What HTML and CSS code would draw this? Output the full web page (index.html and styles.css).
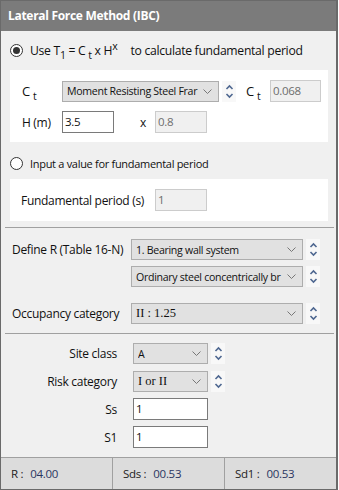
FILE: index.html
```html
<!DOCTYPE html>
<html lang="en">
<head>
  <meta charset="UTF-8">
  <title>Lateral Force Method (IBC)</title>
  <link rel="stylesheet" href="styles.css">
</head>
<body>

  <div class="window">
    <div class="title">Lateral Force Method (IBC)</div>

    <div class="content">
      <div class="radio-row first">
        <span class="radio checked"></span>
        <span>Use T<sub>1</sub> = C <sub>t</sub> x H<sup>x</sup></span>
        <span class="tail">to calculate fundamental period</span>
      </div>

      <div class="panel panel-ct">
        <div class="row">
          <span class="lbl lbl-ct">C <sub>t</sub></span>
          <div class="select sel-ct"><span class="val">Moment Resisting Steel Frar</span><svg class="chev" width="9" height="5" viewBox="0 0 9 5"><polyline points="0.5,0.5 4.5,4.5 8.5,0.5" fill="none" stroke="#777" stroke-width="1"/></svg></div>
          <div class="spin"><svg width="9" height="15" viewBox="0 0 9 15"><polyline points="1.5,5 4.5,2 7.5,5" fill="none" stroke="#4e6790" stroke-width="1.6"/><polyline points="1.5,10 4.5,13 7.5,10" fill="none" stroke="#4e6790" stroke-width="1.6"/></svg></div>
          <span class="lbl lbl-ct2">C <sub>t</sub></span>
          <div class="input disabled w50">0.068</div>
        </div>
        <div class="row row-h">
          <span class="lbl lbl-h">H (m)</span>
          <div class="input w52">3.5</div>
          <span class="lbl lbl-x">x</span>
          <div class="input disabled w52">0.8</div>
        </div>
      </div>

      <div class="radio-row second">
        <span class="radio"></span>
        <span>Input a value for fundamental period</span>
      </div>

      <div class="panel panel-fp">
        <div class="row">
          <span class="lbl lbl-fp">Fundamental period (s)</span>
          <div class="input disabled w52">1</div>
        </div>
      </div>

      <div class="sep sep1"></div>

      <div class="row row-r">
        <span class="lbl lbl-wide">Define R (Table 16-N)</span>
        <div class="select sel-wide"><span class="val">1. Bearing wall system</span><svg class="chev" width="9" height="5" viewBox="0 0 9 5"><polyline points="0.5,0.5 4.5,4.5 8.5,0.5" fill="none" stroke="#777" stroke-width="1"/></svg></div>
        <div class="spin"><svg width="9" height="15" viewBox="0 0 9 15"><polyline points="1.5,5 4.5,2 7.5,5" fill="none" stroke="#4e6790" stroke-width="1.6"/><polyline points="1.5,10 4.5,13 7.5,10" fill="none" stroke="#4e6790" stroke-width="1.6"/></svg></div>
      </div>
      <div class="row row-r2">
        <span class="lbl lbl-wide"></span>
        <div class="select sel-wide"><span class="val">Ordinary steel concentrically br</span><svg class="chev" width="9" height="5" viewBox="0 0 9 5"><polyline points="0.5,0.5 4.5,4.5 8.5,0.5" fill="none" stroke="#777" stroke-width="1"/></svg></div>
        <div class="spin"><svg width="9" height="15" viewBox="0 0 9 15"><polyline points="1.5,5 4.5,2 7.5,5" fill="none" stroke="#4e6790" stroke-width="1.6"/><polyline points="1.5,10 4.5,13 7.5,10" fill="none" stroke="#4e6790" stroke-width="1.6"/></svg></div>
      </div>
      <div class="row row-occ">
        <span class="lbl lbl-wide">Occupancy category</span>
        <div class="select sel-wide"><span class="val serif">II : 1.25</span><svg class="chev" width="9" height="5" viewBox="0 0 9 5"><polyline points="0.5,0.5 4.5,4.5 8.5,0.5" fill="none" stroke="#777" stroke-width="1"/></svg></div>
        <div class="spin"><svg width="9" height="15" viewBox="0 0 9 15"><polyline points="1.5,5 4.5,2 7.5,5" fill="none" stroke="#4e6790" stroke-width="1.6"/><polyline points="1.5,10 4.5,13 7.5,10" fill="none" stroke="#4e6790" stroke-width="1.6"/></svg></div>
      </div>

      <div class="sep sep2"></div>

      <div class="row row-site">
        <span class="lbl lbl-right">Site class</span>
        <div class="select sel-short"><span class="val">A</span><svg class="chev" width="9" height="5" viewBox="0 0 9 5"><polyline points="0.5,0.5 4.5,4.5 8.5,0.5" fill="none" stroke="#777" stroke-width="1"/></svg></div>
        <div class="spin"><svg width="9" height="15" viewBox="0 0 9 15"><polyline points="1.5,5 4.5,2 7.5,5" fill="none" stroke="#4e6790" stroke-width="1.6"/><polyline points="1.5,10 4.5,13 7.5,10" fill="none" stroke="#4e6790" stroke-width="1.6"/></svg></div>
      </div>
      <div class="row row-risk">
        <span class="lbl lbl-right">Risk category</span>
        <div class="select sel-short"><span class="val serif">I or II</span><svg class="chev" width="9" height="5" viewBox="0 0 9 5"><polyline points="0.5,0.5 4.5,4.5 8.5,0.5" fill="none" stroke="#777" stroke-width="1"/></svg></div>
        <div class="spin"><svg width="9" height="15" viewBox="0 0 9 15"><polyline points="1.5,5 4.5,2 7.5,5" fill="none" stroke="#4e6790" stroke-width="1.6"/><polyline points="1.5,10 4.5,13 7.5,10" fill="none" stroke="#4e6790" stroke-width="1.6"/></svg></div>
      </div>
      <div class="row row-ss">
        <span class="lbl lbl-right">Ss</span>
        <div class="input w75">1</div>
      </div>
      <div class="row row-s1">
        <span class="lbl lbl-right">S1</span>
        <div class="input w75">1</div>
      </div>
    </div>

    <div class="status">
      <div class="cell"><span class="k">R :</span><span class="v">04.00</span></div>
      <div class="cell"><span class="k">Sds :</span><span class="v">00.53</span></div>
      <div class="cell"><span class="k">Sd1 :</span><span class="v">00.53</span></div>
    </div>
  </div>

</body>
</html>
```

FILE: styles.css
```css
* {
  margin: 0;
  padding: 0;
  box-sizing: border-box;
}

body {
  width: 339px;
  height: 490px;
  background: #fff;
  font-family: 'Open Sans', 'Noto Sans', sans-serif;
  font-size: 12px;
  letter-spacing: -0.3px;
  color: #111;
}

.window {
  width: 338px;
  height: 490px;
  border: 1px solid #6a6a6a;
  border-right-width: 2px;
  background: #f0f0f0;
  display: flex;
  flex-direction: column;
}

.title {
  height: 30px;
  background: #7b7b7b;
  color: #fff;
  font-weight: 700;
  font-size: 12px;
  letter-spacing: -0.3px;
  line-height: 30px;
  padding-left: 7px;
}

.content {
  flex: 1;
  padding: 0 8px 0 9px;
  display: flex;
  flex-direction: column;
}

sub, sup {
  font-size: 10.5px;
  line-height: 0;
}

sub { vertical-align: -4px; }
sup { vertical-align: 5px; }

/* radio rows */
.radio-row {
  display: flex;
  align-items: center;
  height: 16px;
}

.radio-row.first { margin-top: 11px; font-size: 12.2px; }
.radio-row.second { margin-top: 13px; font-size: 11px; }

.radio {
  width: 13px;
  height: 13px;
  border: 1px solid #333;
  border-radius: 50%;
  background: #fff;
  margin-right: 7px;
  display: flex;
  align-items: center;
  justify-content: center;
}

.radio.checked::after {
  content: "";
  width: 7px;
  height: 7px;
  border-radius: 50%;
  background: #333;
}

.tail { margin-left: 13px; }

/* white panels */
.panel {
  background: #fff;
  display: flex;
  flex-direction: column;
}

.panel-ct {
  margin-top: 12px;
  height: 72px;
  padding: 10px 0 0 12px;
}

.panel-fp {
  margin-top: 8px;
  height: 42px;
  padding: 10px 0 0 11px;
}

.row {
  display: flex;
  align-items: center;
}

.row-h { margin-top: 9px; }

.lbl { white-space: nowrap; }
.lbl-ct { width: 40px; font-size: 13px; }
.lbl-ct2 { width: 24px; margin-left: 10px; font-size: 13px; }
.lbl-h { width: 40px; }
.lbl-x { width: 15px; margin-left: 26px; }
.lbl-fp { width: 134px; }

/* inputs */
.input {
  height: 22px;
  border: 1px solid #7a7a7a;
  background: #fff;
  padding-left: 2px;
  line-height: 20px;
  font-size: 11.5px;
}

.input.disabled {
  border-color: #ccc;
  background: #f0f0f0;
  color: #6d6d6d;
}

.w50 { width: 51px; }
.w52 { width: 52px; }
.w75 { width: 75px; }

/* combo boxes */
.select {
  height: 21px;
  border: 1px solid #adadad;
  background: #e1e1e1;
  display: flex;
  align-items: center;
  padding: 0 6px 0 4px;
  font-size: 10.6px;
}

.select .val {
  flex: 1;
  overflow: hidden;
  white-space: nowrap;
}

.select .serif {
  font-family: 'Liberation Serif', serif;
  font-size: 12.5px;
  letter-spacing: 0;
}

.chev { flex: none; margin-left: 4px; }

.sel-ct { width: 157px; }
.sel-wide { width: 172px; }
.sel-short { width: 75px; }

.spin {
  width: 14px;
  height: 21px;
  margin-left: 3px;
  background: #f8f8f8;
  display: flex;
  align-items: center;
  justify-content: center;
}

/* separators */
.sep {
  height: 1px;
  background: #a0a0a0;
  margin-left: -5px;
  margin-right: -6px;
}

.sep1 { margin-top: 6px; }
.sep2 { margin-top: 9px; }

.lbl-wide { width: 121px; padding-left: 2px; }
.lbl-right { width: 107px; text-align: right; margin-right: 16px; }

.row-r { margin-top: 11px; }
.row-r2 { margin-top: 6px; }
.row-occ { margin-top: 16px; }
.row-site { margin-top: 9px; }
.row-risk { margin-top: 7px; }
.row-ss { margin-top: 6px; }
.row-s1 { margin-top: 6px; }

/* status bar */
.status {
  height: 32px;
  border-top: 1px solid #a0a0a0;
  background: #dcdcdc;
  display: flex;
}

.cell {
  width: 112px;
  display: flex;
  align-items: center;
  padding-left: 10px;
  border-right: 1px solid #a0a0a0;
  font-size: 11.5px;
}

.cell:last-child {
  flex: 1;
  border-right: none;
}

.k { color: #222; margin-right: 7px; }
.v { color: #2a3560; }
```
